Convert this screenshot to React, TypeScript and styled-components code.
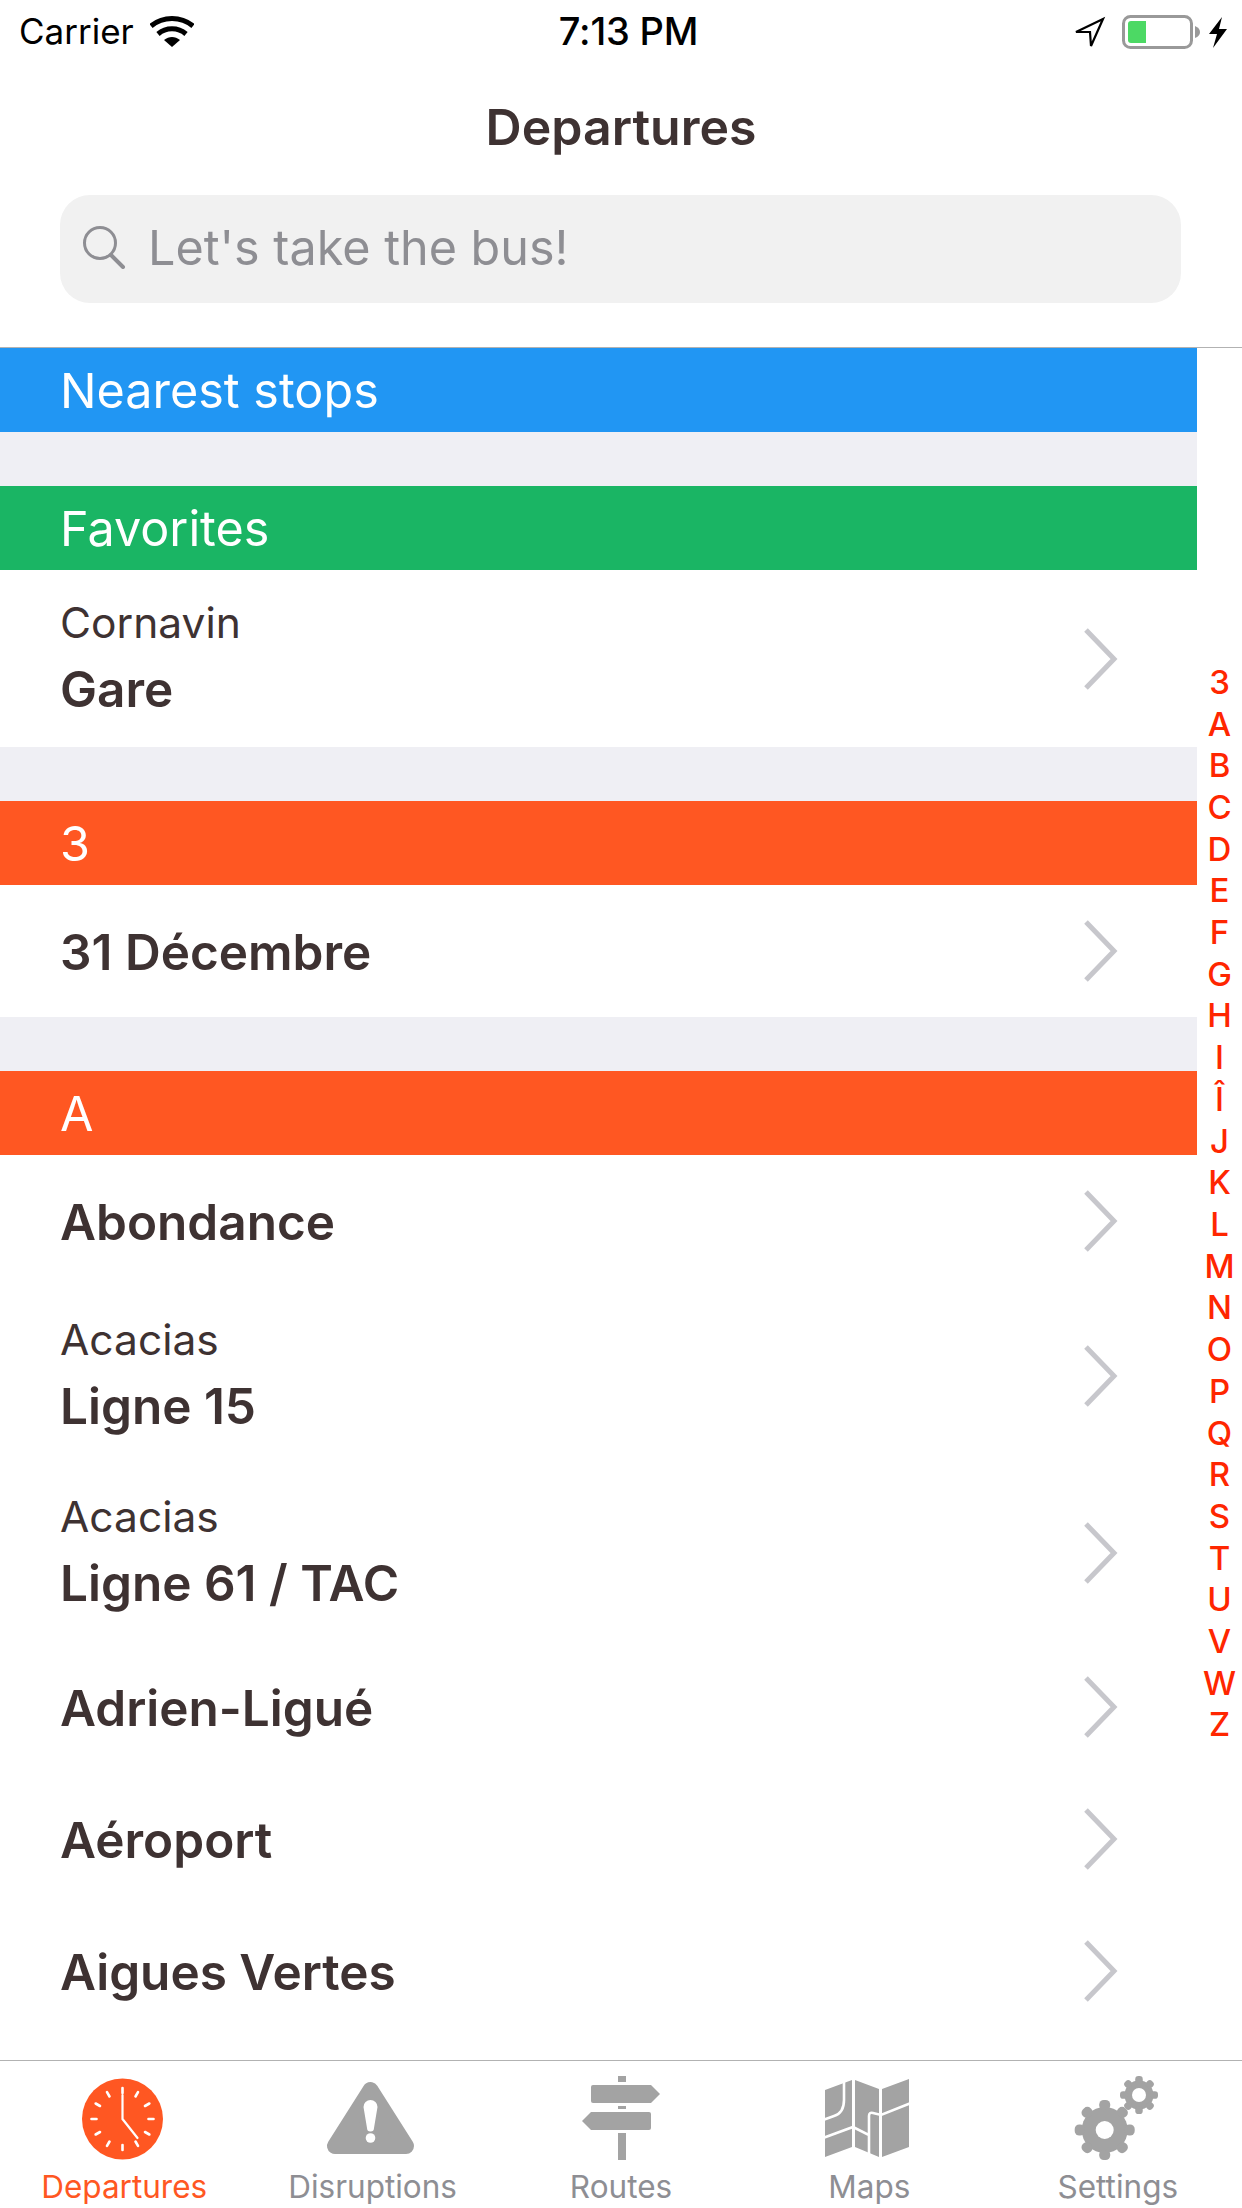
import styled, { createGlobalStyle } from 'styled-components';

const GlobalStyle = createGlobalStyle`
	html, body {
		margin: 0;
		padding: 0;
		background: #fff;
	}
	* {
		box-sizing: border-box;
	}
`;

const Screen = styled.div`
	display: flex;
	flex-direction: column;
	width: 1242px;
	height: 2208px;
	overflow: hidden;
	background: #fff;
	font-family: Inter, 'Liberation Sans', sans-serif;
	color: #3e3232;
`;

const Header = styled.header`
	flex: none;
	height: 348px;
	border-bottom: 1px solid #b2b2b2;
`;

const StatusBar = styled.div`
	display: grid;
	grid-template-columns: 1fr auto 1fr;
	align-items: center;
	height: 62px;
	color: #000;
	font-size: 35px;

	> .left {
		display: flex;
		align-items: center;
		gap: 16px;
		padding-left: 19px;
	}

	> .time {
		font-size: 38px;
		font-weight: 500;
		letter-spacing: -0.2px;
		margin-left: 15px;
	}

	> .right {
		display: flex;
		justify-content: flex-end;
		margin-top: 2px;
	}
`;

const Title = styled.h1`
	display: flex;
	align-items: center;
	justify-content: center;
	height: 129px;
	margin: 0 0 4px;
	font-size: 50px;
	font-weight: 600;
`;

const SearchBox = styled.div`
	display: flex;
	align-items: center;
	gap: 22px;
	height: 108px;
	margin: 0 61px 0 60px;
	padding: 0 0 4px 22px;
	border-radius: 30px;
	background: #f1f1f1;
	color: #8e8e93;
	font-size: 48.5px;
`;

const Main = styled.main`
	flex: 1;
	display: flex;
	min-height: 0;
`;

const List = styled.div`
	flex: none;
	width: 1197px;
`;

const Section = styled.section<{ $gap: boolean }>`
	padding-top: ${(props) => (props.$gap ? '54px' : '0')};
	background: #efeff4;
`;

const SectionHead = styled.div<{ $color: string }>`
	display: flex;
	align-items: center;
	height: 84px;
	padding-left: 60px;
	background: ${(props) => props.$color};
	color: #fff;
	font-size: 48.5px;
`;

const Row = styled.div<{ $tall: boolean }>`
	display: flex;
	align-items: center;
	justify-content: space-between;
	height: ${(props) => (props.$tall ? '177px' : '132px')};
	padding: 0 78px 0 60px;
	background: #fff;
`;

const RowText = styled.div<{ $tall: boolean }>`
	display: flex;
	flex-direction: column;
	gap: 12px;
	margin-top: ${(props) => (props.$tall ? '-2px' : '2px')};

	> .sub {
		font-size: 42.5px;
		line-height: 50px;
	}

	> .name {
		font-size: 49.5px;
		font-weight: 600;
		line-height: 58px;
	}
`;

const IndexBar = styled.nav`
	flex: 1;
	display: flex;
	flex-direction: column;
	align-items: center;
	justify-content: center;
	color: #ff2600;
	font-size: 33px;
	font-weight: 550;
	line-height: 41.7px;
`;

const TabBar = styled.footer`
	flex: none;
	display: grid;
	grid-template-columns: repeat(5, 1fr);
	height: 148px;
	border-top: 1px solid #b2b2b2;
`;

const Tab = styled.div<{ $active?: boolean }>`
	display: flex;
	flex-direction: column;
	align-items: center;
	padding-top: 9px;
	color: ${(props) => (props.$active ? '#ff5722' : '#8e8e93')};
	font-size: 31.5px;
	line-height: 40px;

	> svg {
		flex: none;
		margin-bottom: 2px;
	}
`;

const Chevron = () => (
	<svg width="36" height="64" viewBox="0 0 36 64">
		<path d="M3 3 L31 32 L3 61" fill="none" stroke="#c7c7cc" strokeWidth="5" />
	</svg>
);

const WifiIcon = () => (
	<svg width="44" height="31" viewBox="0 0 44 31">
		<path d="M1 10 C13 0 31 0 43 10" fill="none" stroke="#000" strokeWidth="5" />
		<path d="M8 18 C16 11 28 11 36 18" fill="none" stroke="#000" strokeWidth="5" />
		<path d="M22 31 L14 24 C19 20 25 20 30 24 Z" fill="#000" />
	</svg>
);

const StatusIcons = () => (
	<svg width="172" height="60" viewBox="0 0 172 60">
		<path d="M33 17 L6 30 L20 30 L21 44 Z" fill="none" stroke="#000" strokeWidth="2.2" />
		<rect x="53.5" y="14.5" width="68" height="31" rx="7" fill="none" stroke="#999" strokeWidth="3" />
		<path d="M61 19 H76 V41 H61 Q58 41 58 38 V22 Q58 19 61 19 Z" fill="#4cd964" />
		<path d="M125 24 Q130 26 130 30 Q130 34 125 36 Z" fill="#999" />
		<path d="M152 15 L139 32 L147 32 L143 46 L157 27 L149 27 Z" fill="#000" />
	</svg>
);

const SearchIcon = () => (
	<svg width="44" height="44" viewBox="0 0 44 44">
		<circle cx="18" cy="18" r="15.5" fill="none" stroke="#8e8e93" strokeWidth="3" />
		<path d="M29 30 L41 42" fill="none" stroke="#8e8e93" strokeWidth="4" strokeLinecap="round" />
	</svg>
);

const ClockIcon = () => {
	const ticks = Array.from({ length: 12 }, (_, i) => i * 30);
	return (
		<svg width="100" height="95" viewBox="0 0 100 95">
			<circle cx="48.5" cy="49" r="40.5" fill="#ff5722" />
			{ticks.map((angle) => (
				<path
					key={angle}
					d="M48.5 18 V23"
					stroke="#fff"
					strokeWidth="2.6"
					strokeLinecap="round"
					transform={`rotate(${angle} 48.5 49)`}
				/>
			))}
			<path d="M48.5 25 V49 L63.5 68" fill="none" stroke="#fff" strokeWidth="2.2" strokeLinecap="round" />
		</svg>
	);
};

const WarningIcon = () => (
	<svg width="100" height="95" viewBox="0 0 100 95">
		<path d="M47.5 20 L12 76 H83 Z" fill="#a3a3a3" stroke="#a3a3a3" strokeWidth="16" strokeLinejoin="round" />
		<path d="M40.5 37 a7 7 0 0 1 14 0 L51 58 a3.5 3.5 0 0 1 -7 0 Z" fill="#fff" />
		<circle cx="47.5" cy="68" r="4.8" fill="#fff" />
	</svg>
);

const SignpostIcon = () => (
	<svg width="100" height="95" viewBox="0 0 100 95" fill="#a3a3a3">
		<rect x="47" y="6" width="8" height="6" />
		<path d="M22 15 H80 L89 24 L80 33 H22 Q20 33 20 31 V17 Q20 15 22 15 Z" />
		<rect x="47" y="36" width="8" height="3" />
		<path d="M20 42 H78 Q80 42 80 44 V58 Q80 60 78 60 H20 L11 51 Z" />
		<rect x="47" y="63" width="8" height="27" />
	</svg>
);

const MapIcon = () => (
	<svg width="100" height="95" viewBox="0 0 100 95">
		<path d="M6 20 L33 10 V77 L6 87 Z M36 10 L60 19 V87 L36 77 Z M63 19 L90 9 V77 L63 87 Z" fill="#a3a3a3" />
		<path
			d="M25 8 V30 Q25 43 15 46 L4 50 M4 68 L34 57 L50 65 V90 M50 66 V46 Q50 42 54 43 L62 45 L92 33"
			fill="none"
			stroke="#fff"
			strokeWidth="2.6"
		/>
	</svg>
);

const Gear = ({ cx, cy, radius, body, tooth, hole }: { cx: number; cy: number; radius: number; body: number; tooth: number; hole: number }) => {
	const angles = Array.from({ length: 8 }, (_, i) => i * 45);
	return (
		<g fill="#a3a3a3">
			<circle cx={cx} cy={cy} r={body} />
			{angles.map((angle) => (
				<rect
					key={angle}
					x={cx - tooth / 2}
					y={cy - radius}
					width={tooth}
					height={radius - body + 3}
					rx={tooth / 2.4}
					transform={`rotate(${angle} ${cx} ${cy})`}
				/>
			))}
			<circle cx={cx} cy={cy} r={hole} fill="#fff" />
		</g>
	);
};

const GearsIcon = () => (
	<svg width="100" height="95" viewBox="0 0 100 95">
		<Gear cx={36.7} cy={60} radius={30} body={23} tooth={11} hole={9} />
		<Gear cx={71} cy={25} radius={19} body={14.5} tooth={7.5} hole={7} />
	</svg>
);

const sections = [
	{ title: 'Nearest stops', color: '#2196f3', rows: [] },
	{ title: 'Favorites', color: '#1ab564', rows: [{ sub: 'Cornavin', name: 'Gare' }] },
	{ title: '3', color: '#ff5722', rows: [{ name: '31 Décembre' }] },
	{
		title: 'A',
		color: '#ff5722',
		rows: [
			{ name: 'Abondance' },
			{ sub: 'Acacias', name: 'Ligne 15' },
			{ sub: 'Acacias', name: 'Ligne 61 / TAC' },
			{ name: 'Adrien-Ligué' },
			{ name: 'Aéroport' },
			{ name: 'Aigues Vertes' },
		],
	},
] as { title: string; color: string; rows: { sub?: string; name: string }[] }[];

const letters = ['3', 'A', 'B', 'C', 'D', 'E', 'F', 'G', 'H', 'I', 'Î', 'J', 'K', 'L', 'M', 'N', 'O', 'P', 'Q', 'R', 'S', 'T', 'U', 'V', 'W', 'Z'];

const tabs = [
	{ label: 'Departures', icon: <ClockIcon />, active: true },
	{ label: 'Disruptions', icon: <WarningIcon /> },
	{ label: 'Routes', icon: <SignpostIcon /> },
	{ label: 'Maps', icon: <MapIcon /> },
	{ label: 'Settings', icon: <GearsIcon /> },
];

export default function App() {
	return (
		<Screen>
			<GlobalStyle />
			<Header>
				<StatusBar>
					<div className="left">
						<span>Carrier</span>
						<WifiIcon />
					</div>
					<div className="time">7:13 PM</div>
					<div className="right">
						<StatusIcons />
					</div>
				</StatusBar>
				<Title>Departures</Title>
				<SearchBox>
					<SearchIcon />
					<span>Let's take the bus!</span>
				</SearchBox>
			</Header>
			<Main>
				<List>
					{sections.map((section, i) => (
						<Section key={section.title} $gap={i > 0}>
							<SectionHead $color={section.color}>{section.title}</SectionHead>
							{section.rows.map((row) => (
								<Row key={row.sub + row.name} $tall={!!row.sub}>
									<RowText $tall={!!row.sub}>
										{row.sub && <span className="sub">{row.sub}</span>}
										<span className="name">{row.name}</span>
									</RowText>
									<Chevron />
								</Row>
							))}
						</Section>
					))}
				</List>
				<IndexBar>
					{letters.map((letter) => (
						<span key={letter}>{letter}</span>
					))}
				</IndexBar>
			</Main>
			<TabBar>
				{tabs.map((tab) => (
					<Tab key={tab.label} $active={tab.active}>
						{tab.icon}
						<span>{tab.label}</span>
					</Tab>
				))}
			</TabBar>
		</Screen>
	);
}
